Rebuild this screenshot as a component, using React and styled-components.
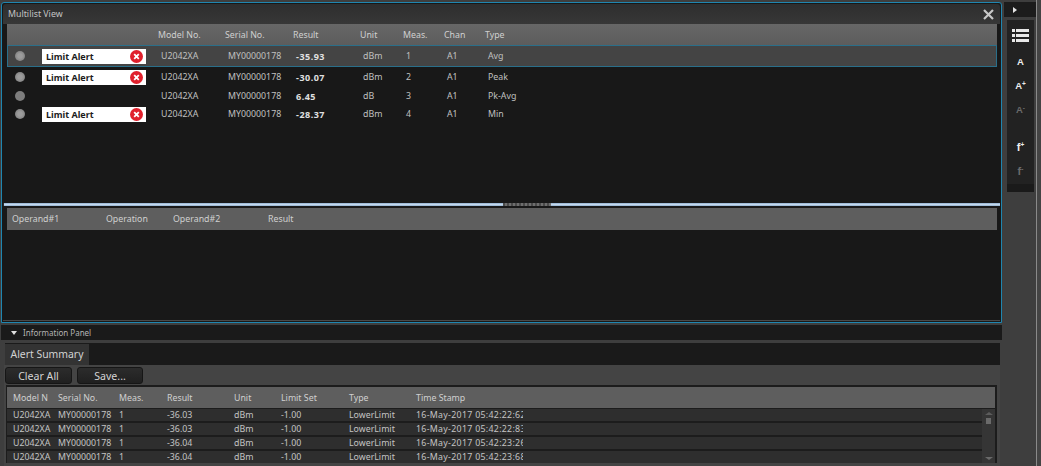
import React from "react";
import styled, { createGlobalStyle } from "styled-components";

const Global = createGlobalStyle`
  html, body { margin: 0; padding: 0; height: 466px; overflow: hidden; background: #3e3e3e; }
  * { box-sizing: border-box; }
  #root { font-family: "Noto Sans", "DejaVu Sans", sans-serif; font-size: 8.8px; color: #c4c4c4; }
`;

const Page = styled.div`
  display: flex; width: 1041px; height: 466px; background: #3e3e3e; overflow: hidden;
`;
const Main = styled.div`
  width: 1003px; flex: none; display: flex; flex-direction: column;
`;
const TopPanel = styled.section`
  margin: 2px 0 0 1px; width: 1001px; height: 321px; flex: none;
  border: 1px solid #1f86b0; border-radius: 3px 3px 0 0; padding: 1px;
  background: #181818; display: flex; flex-direction: column;
`;
const TitleBar = styled.div`
  height: 20px; flex: none; padding: 0 4px 0 5px; display: flex; align-items: center; justify-content: space-between;
  background: linear-gradient(#2e2e2e, #373737); color: #c4c4c4; border-radius: 3px 3px 0 0;
`;
const CloseIcon = styled.svg`
  width: 11px; height: 11px; margin-right: 2px;
`;
const ListArea = styled.div`
  height: 179px; flex: none; padding: 0 3px 0 4px; background: #181818;
  display: flex; flex-direction: column;
`;
const Grid = styled.div`
  display: grid; align-items: center;
  grid-template-columns: 151px 67px 68px 67px 43px 41px 41px 1fr;
`;
const HeadRow = styled(Grid)`
  height: 21px; flex: none; background: linear-gradient(#676767, #5c5c5c); color: #d0d0d0;
`;
const DataRow = styled(Grid)`
  height: ${p => p.$h}px; flex: none;
  background: ${p => p.$selected ? "#444444" : "transparent"};
  box-shadow: ${p => p.$selected ? "inset 0 0 0 1px #2a6f8a" : "none"};
`;
const Cell = styled.span`
  padding-left: 3px; white-space: nowrap; color: #c0c0c0;
`;
const ValueCell = styled(Cell)`
  font-weight: 700; color: #e0e0e0; font-size: 9px; letter-spacing: 0.5px;
`;
const HeadCell = styled.span` white-space: nowrap; `;
const StatusCell = styled.div`
  display: flex; align-items: center; padding-left: 8px; gap: 17px;
`;
const Dot = styled.i`
  display: block; width: 10px; height: 10px; border-radius: 50%; flex: none;
  background: ${p => p.$flat ? "#7d7d7d" : "radial-gradient(circle, #9c9c9c 30%, #747474 100%)"};
`;
const Badge = styled.div`
  width: 104px; height: 15px; background: #fff; color: #1c1c1c; font-weight: 700; font-size: 9px;
  display: flex; align-items: center; justify-content: space-between; padding: 0 3px 0 4px;
`;
const AlertIcon = styled.svg` width: 13px; height: 13px; flex: none; `;
const Splitter = styled.div`
  height: 3px; flex: none; background: linear-gradient(#8fb0d0, #c4d8ec, #8fb0d0);
  display: flex; padding-left: 499px; border-left: 1px solid #2b2b2b;
`;
const Grip = styled.div`
  width: 48px; height: 3px;
  background: repeating-linear-gradient(90deg, #4a4a4a 0 2px, #6e6e6e 2px 4px);
`;
const OpArea = styled.div`
  flex: 1; padding: 2px 3px 0 4px; background: #181818; border-bottom: 1px solid #4a4a4a;
`;
const OpHead = styled.div`
  height: 22px; background: #5e5e5e; color: #d0d0d0; display: grid; align-items: center;
  grid-template-columns: 94px 67px 95px 1fr; padding-left: 5px;
`;
const InfoBar = styled.div`
  height: 15px; flex: none; margin: 2px 1px 0 1px; background: #1a1a1a; color: #b4b4b4; font-size: 8px;
  display: flex; align-items: center; gap: 6px; padding-left: 10px;
`;
const Caret = styled.i`
  width: 0; height: 0; border-left: 3px solid transparent; border-right: 3px solid transparent; border-top: 4px solid #e0e0e0;
`;
const TabStrip = styled.div`
  height: 22px; flex: none; margin: 3px 3px 0 5px; background: #1a1a1a; display: flex; align-items: flex-end;
`;
const Tab = styled.div`
  width: 84px; height: 21px; padding-bottom: 2px; background: #333; color: #d2d2d2; font-size: 10.4px;
  display: flex; align-items: center; justify-content: center;
`;
const InfoBody = styled.div`
  flex: 1; margin: 0 3px 0 4px; background: #444; min-height: 0; display: flex; flex-direction: column;
`;
const Buttons = styled.div`
  height: 20px; flex: none; display: flex; gap: 5px; padding: 2px 0 0 1px;
`;
const Btn = styled.button`
  width: ${p => p.$w}px; height: 17px; padding: 0; font: inherit; font-size: 10.6px; color: #d4d4d4;
  background: linear-gradient(#2c2c2c, #202020); border: 1px solid #161616; border-radius: 3px;
`;
const AlertTable = styled.div`
  flex: none; height: 78px; margin: 0 0 0 2px; width: 991px; border: 1px solid #1c1c1c; border-width: 2px 2px 0 1px;
  background: #1c1c1c; display: flex; flex-direction: column;
`;
const AGrid = styled.div`
  display: grid; align-items: center; padding-left: 6px;
  grid-template-columns: 45px 61px 48px 67px 47px 68px 67px 107px;
`;
const AHead = styled(AGrid)`
  height: 21px; flex: none; background: #5e5e5e; color: #d0d0d0; margin-bottom: 1px;
`;
const AHeadClip = styled.span`
  display: block; width: 35px; overflow: hidden; white-space: nowrap;
`;
const ARows = styled.div`
  flex: 1; display: flex; min-height: 0; overflow: hidden;
`;
const AList = styled.div`
  flex: 1; display: flex; flex-direction: column; overflow: hidden;
`;
const ARow = styled(AGrid)`
  height: 12px; flex: none; margin-bottom: 2px; background: #2e2e2e; color: #c4c4c4; line-height: 12px;
`;
const AClip = styled.span`
  display: block; overflow: hidden; white-space: nowrap; letter-spacing: 0.3px;
`;
const Scroll = styled.div`
  width: 13px; flex: none; background: #353535; display: flex; flex-direction: column; align-items: center; padding-top: 3px; position: relative; height: 100%;
`;
const ScrollThumb = styled.i`
  width: 5px; height: 6px; background: #6a6a6a; margin-top: 3px; display: block;
`;
const ArrowUp = styled.i`
  width: 0; height: 0; border-left: 4px solid transparent; border-right: 4px solid transparent; border-bottom: 3px solid #5c5c5c; display: block;
`;
const ArrowDown = styled.i`
  position: absolute; bottom: 3px; width: 0; height: 0; border-left: 4px solid transparent; border-right: 4px solid transparent; border-top: 3px solid #6a6a6a; display: block;
`;
const Side = styled.aside`
  width: 34px; flex: none; padding: 2px 0 0 1px; display: flex; flex-direction: column; align-items: flex-start; border-right: 1px solid #8a8a8a;
  height: 466px;
`;
const CollapseBox = styled.div`
  width: 32px; height: 15px; background: #1c1c1c; display: flex; align-items: center; padding-left: 9px;
`;
const RightCaret = styled.i`
  width: 0; height: 0; border-top: 3px solid transparent; border-bottom: 3px solid transparent; border-left: 4px solid #e4e4e4;
`;
const Tools = styled.div`
  width: 27px; height: 172px; margin: 3px 0 0 3px; background: #222; border-bottom: 8px solid #1a1a1a;
  display: flex; flex-direction: column; align-items: center; padding-top: 9px;
`;
const ListIcon = styled.svg` width: 17px; height: 13px; margin: 0 1px 8px 0; flex: none; `;
const ToolGlyph = styled.div`
  height: 24px; line-height: 24px; font-weight: 700; font-size: ${p => p.$f ? 11 : 9.5}px; font-family: "Liberation Sans", sans-serif;
  color: ${p => p.$dim ? "#6a6a6a" : "#eeeeee"}; margin-top: ${p => p.$gap || 0}px; display: flex; flex: none;
  & > sup { font-size: 6.5px; line-height: 20px; vertical-align: baseline; }
`;
const Rest = styled.div` flex: 1; background: #444; `;

const rows = [
  { h: 22, sel: true, alert: true, v: "-35.93", u: "dBm", m: "1", t: "Avg" },
  { h: 20, alert: true, v: "-30.07", u: "dBm", m: "2", t: "Peak" },
  { h: 18, v: "6.45", u: "dB", m: "3", t: "Pk-Avg" },
  { h: 18, alert: true, v: "-28.37", u: "dBm", m: "4", t: "Min" },
];
const alerts = [
  ["-36.03", "16-May-2017 05:42:22:62"],
  ["-36.03", "16-May-2017 05:42:22:83"],
  ["-36.04", "16-May-2017 05:42:23:26"],
  ["-36.04", "16-May-2017 05:42:23:68"],
];

export default function App() {
  return (
    <Page>
      <Global />
      <Main>
        <TopPanel>
          <TitleBar>
            <span>Multilist View</span>
            <CloseIcon viewBox="0 0 11 11"><path d="M1 1l9 9M10 1l-9 9" stroke="#c8c8c8" strokeWidth="2.2" /></CloseIcon>
          </TitleBar>
          <ListArea>
            <HeadRow>
              <span />
              <HeadCell>Model No.</HeadCell><HeadCell>Serial No.</HeadCell><HeadCell>Result</HeadCell>
              <HeadCell>Unit</HeadCell><HeadCell>Meas.</HeadCell><HeadCell>Chan</HeadCell><HeadCell>Type</HeadCell>
            </HeadRow>
            {rows.map(r => (
              <DataRow key={r.m} $h={r.h} $selected={r.sel}>
                <StatusCell>
                  <Dot $flat={!r.alert} />
                  {r.alert && (
                    <Badge>
                      Limit Alert
                      <AlertIcon viewBox="0 0 13 13">
                        <circle cx="6.5" cy="6.5" r="6.5" fill="#e0202c" />
                        <path d="M4.2 4.2l4.6 4.6M8.8 4.2l-4.6 4.6" stroke="#fff" strokeWidth="1.8" />
                      </AlertIcon>
                    </Badge>
                  )}
                </StatusCell>
                <Cell>U2042XA</Cell><Cell>MY00000178</Cell><ValueCell>{r.v}</ValueCell>
                <Cell>{r.u}</Cell><Cell>{r.m}</Cell><Cell>A1</Cell><Cell>{r.t}</Cell>
              </DataRow>
            ))}
          </ListArea>
          <Splitter><Grip /></Splitter>
          <OpArea>
            <OpHead>
              <span>Operand#1</span><span>Operation</span><span>Operand#2</span><span>Result</span>
            </OpHead>
          </OpArea>
        </TopPanel>
        <InfoBar><Caret />Information Panel</InfoBar>
        <TabStrip><Tab>Alert Summary</Tab></TabStrip>
        <InfoBody>
          <Buttons><Btn $w={67}>Clear All</Btn><Btn $w={66}>Save...</Btn></Buttons>
          <AlertTable>
            <AHead>
              <AHeadClip>Model No.</AHeadClip><span>Serial No.</span><span>Meas.</span><span>Result</span>
              <span>Unit</span><span>Limit Set</span><span>Type</span><span>Time Stamp</span>
            </AHead>
            <ARows>
              <AList>
                {alerts.map(([v, ts]) => (
                  <ARow key={ts}>
                    <span>U2042XA</span><span>MY00000178</span><span>1</span><span>{v}</span>
                    <span>dBm</span><span>-1.00</span><span>LowerLimit</span><AClip>{ts}</AClip>
                  </ARow>
                ))}
              </AList>
              <Scroll><ArrowUp /><ScrollThumb /><ArrowDown /></Scroll>
            </ARows>
          </AlertTable>
        </InfoBody>
      </Main>
      <Side>
        <CollapseBox><RightCaret /></CollapseBox>
        <Tools>
          <ListIcon viewBox="0 0 17 13">
            <path d="M0 0h3v3H0zM4 0h13v3H4zM0 5h3v3H0zM4 5h13v3H4zM0 10h3v3H0zM4 10h13v3H4z" fill="#e8e8e8" />
          </ListIcon>
          <ToolGlyph>A</ToolGlyph>
          <ToolGlyph>A<sup>+</sup></ToolGlyph>
          <ToolGlyph $dim>A<sup>-</sup></ToolGlyph>
          <ToolGlyph $f $gap={13}>f<sup>+</sup></ToolGlyph>
          <ToolGlyph $f $dim>f<sup>-</sup></ToolGlyph>
        </Tools>
      </Side>
      <Rest />
    </Page>
  );
}
